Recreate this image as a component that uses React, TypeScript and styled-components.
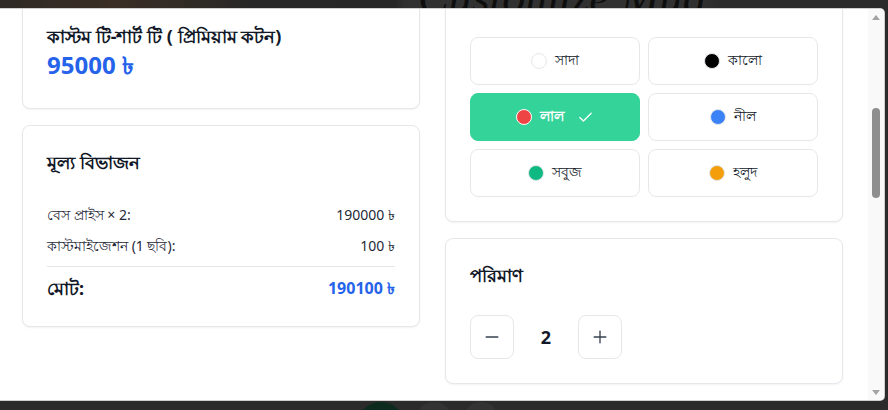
import React, { useLayoutEffect, useRef } from "react";
import styled, { createGlobalStyle } from "styled-components";
import { Check, Minus, Plus } from "lucide-react";

const GlobalStyle = createGlobalStyle`
  html, body { margin: 0; padding: 0; background: #2b2b2b; }
  body { font-family: "Noto Sans", "Open Sans", sans-serif; }
  * { box-sizing: border-box; }
`;

const Stage = styled.div`
  width: 888px;
  height: 410px;
  overflow: hidden;
  background: #2b2b2b;
  display: flex;
  flex-direction: column;
`;

const TopStrip = styled.div`
  height: 9px;
  flex: none;
  overflow: hidden;
  display: flex;
  align-items: flex-end;
  background: linear-gradient(
    90deg,
    #2e2925 0px,
    #3a2e25 110px,
    #2f2a26 200px,
    #272727 250px,
    #262626 395px,
    #313131 405px,
    #313131 700px,
    #2b2b2b 720px
  );
`;

const BgTitle = styled.div`
  margin-left: 418px;
  margin-bottom: -12px;
  font-family: "Liberation Serif", serif;
  font-style: italic;
  font-size: 46px;
  line-height: 1;
  color: #0e0e0e;
  white-space: nowrap;
`;

const Modal = styled.div`
  width: 884px;
  height: 391px;
  flex: none;
  background: #ffffff;
  border-radius: 0 4px 4px 0;
  box-shadow: 0 0 0 1px #cfcfcf;
  display: flex;
  overflow: hidden;
`;

const Scroller = styled.div`
  flex: 1;
  overflow-y: scroll;
  scrollbar-width: none;
  &::-webkit-scrollbar { display: none; }
`;

const Content = styled.div`
  padding: 24px 25px 24px 22px;
`;

const Columns = styled.div`
  display: grid;
  grid-template-columns: 1fr 1fr;
  column-gap: 25px;
  align-items: start;
`;

const Column = styled.div`
  display: flex;
  flex-direction: column;
  gap: 16px;
`;

const Card = styled.section`
  background: #ffffff;
  border: 1px solid #e5e7eb;
  border-radius: 8px;
  padding: 24px;
  box-shadow: 0 1px 2px rgba(0, 0, 0, 0.05);
`;

const Heading = styled.h3<{ $gap?: number }>`
  margin: 0 0 ${(p) => p.$gap ?? 28}px;
  font-size: 18px;
  line-height: 24px;
  font-weight: 700;
  color: #111827;
`;

const ProductTitle = styled.h2`
  margin: 0;
  font-size: 18px;
  line-height: 28px;
  font-weight: 700;
  color: #111827;
`;

const Price = styled.div`
  font-size: 24px;
  line-height: 30px;
  margin-bottom: 4px;
  font-weight: 700;
  color: #2563eb;
`;

const PreviewBox = styled.div`
  height: 77px;
  border-radius: 8px;
  background: #f3f4f6;
`;

const Rows = styled.div`
  display: flex;
  flex-direction: column;
  gap: 9px;
`;

const Row = styled.div`
  display: flex;
  justify-content: space-between;
  align-items: center;
  font-size: 14px;
  line-height: 22px;
  color: #1f2937;
`;

const Divider = styled.hr`
  border: none;
  border-top: 1px solid #e5e7eb;
  margin: 9px 0 7px;
`;

const TotalRow = styled.div`
  display: flex;
  justify-content: space-between;
  align-items: center;
  line-height: 28px;
  font-weight: 700;
`;

const TotalLabel = styled.span`
  font-size: 18px;
  color: #111827;
`;

const TotalValue = styled.span`
  font-size: 16px;
  color: #2563eb;
`;

const SizeRow = styled.div`
  display: flex;
  gap: 8px;
`;

const SizeButton = styled.button`
  width: 48px;
  height: 40px;
  border: 1px solid #e5e7eb;
  border-radius: 8px;
  background: #fff;
  font: inherit;
  font-size: 14px;
`;

const ColorGrid = styled.div`
  display: grid;
  grid-template-columns: 1fr 1fr;
  gap: 8px;
`;

const ColorButton = styled.button<{ $active?: boolean }>`
  height: 48px;
  display: flex;
  align-items: center;
  justify-content: center;
  gap: 8px;
  border-radius: 8px;
  border: 1px solid ${(p) => (p.$active ? "#34d399" : "#e5e7eb")};
  background: ${(p) => (p.$active ? "#34d399" : "#ffffff")};
  color: ${(p) => (p.$active ? "#ffffff" : "#111827")};
  font-family: inherit;
  font-size: 14px;
  font-weight: ${(p) => (p.$active ? 700 : 400)};
  padding: 0;
  cursor: pointer;
`;

const Swatch = styled.span<{ $color: string; $active?: boolean }>`
  width: 16px;
  height: 16px;
  border-radius: 50%;
  background: ${(p) => p.$color};
  border: ${(p) => (p.$active ? "1px solid #ffffff" : "1px solid #e5e7eb")};
  flex: none;
`;

const CheckMark = styled.span`
  display: inline-flex;
  margin-left: 5px;
`;

const QtyRow = styled.div`
  display: flex;
  align-items: center;
  gap: 16px;
`;

const QtyButton = styled.button`
  width: 44px;
  height: 44px;
  display: flex;
  align-items: center;
  justify-content: center;
  border: 1px solid #e5e7eb;
  border-radius: 8px;
  background: #ffffff;
  color: #374151;
  padding: 0;
`;

const QtyValue = styled.span`
  width: 32px;
  text-align: center;
  font-size: 18px;
  font-weight: 700;
  color: #111827;
`;

const Footer = styled.div`
  margin-top: 24px;
  display: flex;
  justify-content: flex-end;
`;

const CartButton = styled.button`
  height: 48px;
  padding: 0 32px;
  border: none;
  border-radius: 8px;
  background: #34d399;
  color: #fff;
  font: inherit;
  font-weight: 700;
`;

const ScrollBar = styled.div`
  width: 16px;
  flex: none;
  background: #f9f9f9;
  display: flex;
  flex-direction: column;
`;

const ArrowButton = styled.div<{ $down?: boolean }>`
  height: 16px;
  display: flex;
  align-items: center;
  justify-content: center;
  &::before {
    content: "";
    width: 0;
    height: 0;
    border-left: 4px solid transparent;
    border-right: 4px solid transparent;
    ${(p) =>
      p.$down
        ? "border-top: 5px solid #a3a3a3;"
        : "border-bottom: 5px solid #a3a3a3;"}
  }
`;

const Track = styled.div`
  flex: 1;
  display: flex;
  flex-direction: column;
  align-items: center;
`;

const Thumb = styled.div`
  margin-top: 83px;
  width: 8px;
  height: 90px;
  border-radius: 4px;
  background: #8e8e8e;
`;

const BottomStrip = styled.div`
  flex: 1;
  display: flex;
  gap: 11px;
  padding: 2px 0 0 357px;
`;

const BgCircle = styled.div<{ $size: number; $color: string }>`
  width: ${(p) => p.$size}px;
  height: ${(p) => p.$size}px;
  border-radius: 50%;
  background: ${(p) => p.$color};
  flex: none;
`;

const colors = [
  { name: "সাদা", color: "#ffffff" },
  { name: "কালো", color: "#000000" },
  { name: "লাল", color: "#ef4444", active: true },
  { name: "নীল", color: "#3b82f6" },
  { name: "সবুজ", color: "#10b981" },
  { name: "হলুদ", color: "#f59e0b" },
];

export default function App() {
  const scrollerRef = useRef<HTMLDivElement>(null);
  const gridRef = useRef<HTMLDivElement>(null);

  useLayoutEffect(() => {
    const s = scrollerRef.current;
    const g = gridRef.current;
    if (!s || !g) return;
    const offset =
      g.getBoundingClientRect().top - s.getBoundingClientRect().top + s.scrollTop;
    s.scrollTop = offset - 28;
  }, []);

  return (
    <>
      <GlobalStyle />
      <Stage>
        <TopStrip>
          <BgTitle>Customize Mug</BgTitle>
        </TopStrip>
        <Modal>
          <Scroller ref={scrollerRef}>
            <Content>
              <Columns>
                <Column>
                  <Card>
                    <Heading>ডিজাইন প্রিভিউ</Heading>
                    <PreviewBox />
                  </Card>
                  <Card>
                    <ProductTitle>কাস্টম টি-শার্ট টি ( প্রিমিয়াম কটন)</ProductTitle>
                    <Price>95000 ৳</Price>
                  </Card>
                  <Card>
                    <Heading $gap={30}>মূল্য বিভাজন</Heading>
                    <Rows>
                      <Row>
                        <span>বেস প্রাইস × 2:</span>
                        <span>190000 ৳</span>
                      </Row>
                      <Row>
                        <span>কাস্টমাইজেশন (1 ছবি):</span>
                        <span>100 ৳</span>
                      </Row>
                    </Rows>
                    <Divider />
                    <TotalRow>
                      <TotalLabel>মোট:</TotalLabel>
                      <TotalValue>190100 ৳</TotalValue>
                    </TotalRow>
                  </Card>
                </Column>
                <Column>
                  <Card>
                    <Heading>সাইজ</Heading>
                    <SizeRow>
                      {["S", "M", "L", "XL"].map((s) => (
                        <SizeButton key={s}>{s}</SizeButton>
                      ))}
                    </SizeRow>
                  </Card>
                  <Card>
                    <Heading>রঙ</Heading>
                    <ColorGrid ref={gridRef}>
                      {colors.map((c) => (
                        <ColorButton key={c.name} $active={c.active}>
                          <Swatch $color={c.color} $active={c.active} />
                          <span>{c.name}</span>
                          {c.active && (
                            <CheckMark>
                              <Check size={17} strokeWidth={1.8} />
                            </CheckMark>
                          )}
                        </ColorButton>
                      ))}
                    </ColorGrid>
                  </Card>
                  <Card>
                    <Heading>পরিমাণ</Heading>
                    <QtyRow>
                      <QtyButton aria-label="কমান">
                        <Minus size={20} strokeWidth={1.6} />
                      </QtyButton>
                      <QtyValue>2</QtyValue>
                      <QtyButton aria-label="বাড়ান">
                        <Plus size={20} strokeWidth={1.6} />
                      </QtyButton>
                    </QtyRow>
                  </Card>
                </Column>
              </Columns>
              <Footer>
                <CartButton>কার্টে যোগ করুন</CartButton>
              </Footer>
            </Content>
          </Scroller>
          <ScrollBar>
            <ArrowButton />
            <Track>
              <Thumb />
            </Track>
            <ArrowButton $down />
          </ScrollBar>
        </Modal>
        <BottomStrip>
          <BgCircle $size={48} $color="#0c2a1d" />
          <BgCircle $size={36} $color="#333333" />
          <BgCircle $size={36} $color="#333333" />
        </BottomStrip>
      </Stage>
    </>
  );
}
